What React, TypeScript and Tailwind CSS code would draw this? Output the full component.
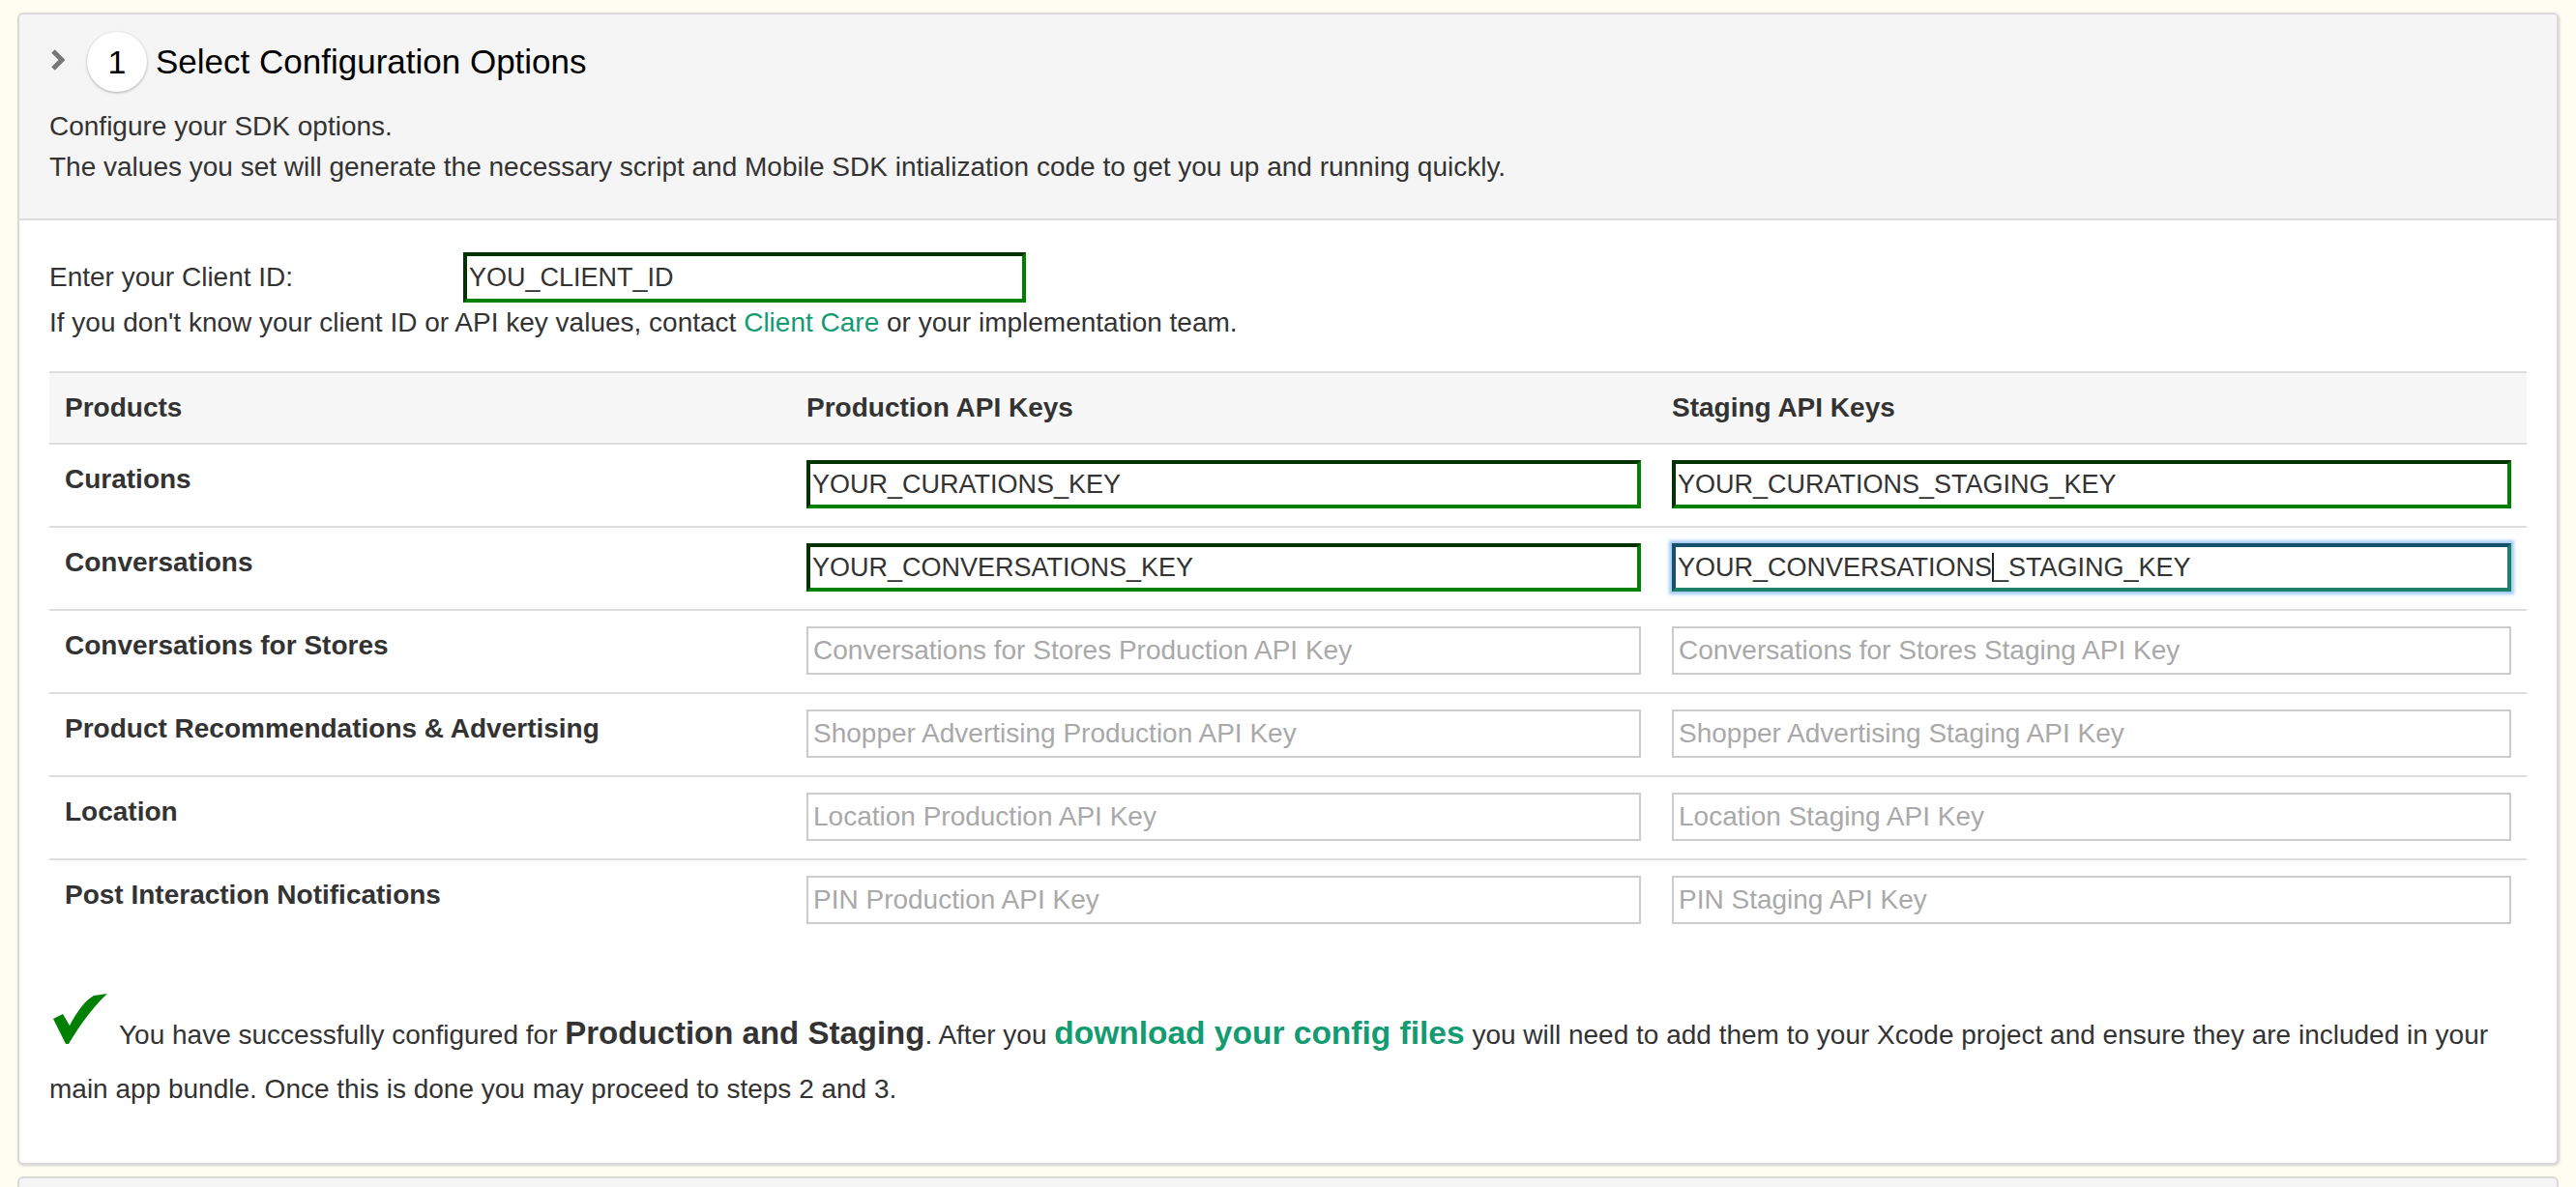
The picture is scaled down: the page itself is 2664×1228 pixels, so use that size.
import React from "react";

const filled =
  "block w-full h-[50px] border-[4px] border-t-[#003300] border-l-[#003300] border-b-[#008000] border-r-[#008000] bg-white px-[2px] text-[27px] text-[#333] outline-none font-['Liberation_Sans',Arial,sans-serif]";
const empty =
  "block w-full h-[50px] border-2 border-[#cccccc] bg-white px-[5px] text-[28px] text-[#333] outline-none placeholder:text-[#a9a9a9] font-['Liberation_Sans',Arial,sans-serif]";

type Row = {
  label: string;
  prod: { value?: string; placeholder?: string };
  stag: { value?: string; placeholder?: string; focused?: boolean };
};

const rows: Row[] = [
  { label: "Curations", prod: { value: "YOUR_CURATIONS_KEY" }, stag: { value: "YOUR_CURATIONS_STAGING_KEY" } },
  {
    label: "Conversations",
    prod: { value: "YOUR_CONVERSATIONS_KEY" },
    stag: { value: "YOUR_CONVERSATIONS_STAGING_KEY", focused: true },
  },
  {
    label: "Conversations for Stores",
    prod: { placeholder: "Conversations for Stores Production API Key" },
    stag: { placeholder: "Conversations for Stores Staging API Key" },
  },
  {
    label: "Product Recommendations & Advertising",
    prod: { placeholder: "Shopper Advertising Production API Key" },
    stag: { placeholder: "Shopper Advertising Staging API Key" },
  },
  {
    label: "Location",
    prod: { placeholder: "Location Production API Key" },
    stag: { placeholder: "Location Staging API Key" },
  },
  {
    label: "Post Interaction Notifications",
    prod: { placeholder: "PIN Production API Key" },
    stag: { placeholder: "PIN Staging API Key" },
  },
];

function Field({ value, placeholder, focused }: { value?: string; placeholder?: string; focused?: boolean }) {
  if (focused && value) {
    return (
      <div className="flex h-[50px] w-full items-center border-[4px] border-t-[#17506a] border-l-[#17506a] border-b-[#1d8068] border-r-[#1d8068] bg-white px-[2px] text-[27px] text-[#333] shadow-[0_0_3px_3px_rgba(110,175,240,0.65)]">
        <span>YOUR_CONVERSATIONS</span>
        <span className="inline-block h-[30px] w-[2px] bg-[#222]" />
        <span>_STAGING_KEY</span>
      </div>
    );
  }
  if (value) return <input readOnly value={value} className={filled} />;
  return <input readOnly placeholder={placeholder} className={empty} />;
}

export default function App() {
  return (
    <div className="min-h-screen bg-[#fdfdf2] px-[18px] pt-[13px] font-['Liberation_Sans',Arial,sans-serif] text-[#333]">
      <div className="overflow-hidden rounded-[6px] border-2 border-[#d9d9d9] bg-white shadow-[1px_1px_3px_rgba(0,0,0,0.18)]">
        {/* Header */}
        <div className="border-b-2 border-[#dcdcdc] bg-[#f5f5f5] px-[31px] pt-[19px] pb-[32px]">
          <div className="flex h-[60px] items-center">
            <svg width="15" height="24" viewBox="0 0 15 24" className="ml-[1px] -mt-[4px]">
              <polyline points="3,3 12,12 3,21" fill="none" stroke="#777" strokeWidth="5" />
            </svg>
            <div className="ml-[23px] flex h-[62px] w-[62px] items-center justify-center rounded-full bg-white text-[34px] text-black shadow-[0_1px_3px_rgba(0,0,0,0.3)]">
              1
            </div>
            <div className="ml-[9px] text-[35px] text-black">Select Configuration Options</div>
          </div>
          <div className="mt-[16px] text-[28px] leading-[42px]">
            <p>Configure your SDK options.</p>
            <p>
              The values you set will generate the necessary script and Mobile SDK intialization code to get you up
              and running quickly.
            </p>
          </div>
        </div>

        {/* Body */}
        <div className="px-[31px] pt-[33px] pb-[48px]">
          <div className="flex items-center text-[28px]">
            <div className="w-[428px]">Enter your Client ID:</div>
            <input
              readOnly
              value="YOU_CLIENT_ID"
              className="block h-[52px] w-[582px] border-[4px] border-t-[#003300] border-l-[#003300] border-b-[#008000] border-r-[#008000] bg-white px-[2px] text-[27px] text-[#333] outline-none font-['Liberation_Sans',Arial,sans-serif]"
            />
          </div>
          <p className="text-[28px] leading-[42px]">
            If you don't know your client ID or API key values, contact{" "}
            <a className="text-[#149b72]">Client Care</a> or your implementation team.
          </p>

          {/* Table */}
          <div className="mt-[29px]">
            <div className="grid h-[74px] grid-cols-[767px_895px_1fr] items-center border-t-2 border-[#dddddd] bg-[#f7f7f7] text-[28px] font-bold text-[#333]">
              <div className="px-[16px]">Products</div>
              <div className="px-[16px]">Production API Keys</div>
              <div className="px-[16px]">Staging API Keys</div>
            </div>
            {rows.map((r) => (
              <div key={r.label} className="grid grid-cols-[767px_895px_1fr] border-t-2 border-[#dddddd]">
                <div className="px-[16px] pt-[16px] pb-[18px] text-[28px] font-bold leading-[40px] text-[#333]">
                  {r.label}
                </div>
                <div className="px-[16px] pt-[16px] pb-[18px]">
                  <Field {...r.prod} />
                </div>
                <div className="px-[16px] pt-[16px] pb-[18px]">
                  <Field {...r.stag} />
                </div>
              </div>
            ))}
          </div>

          {/* Success message */}
          <p className="mt-[69px] text-[28px] leading-[56px]">
            <svg
              width="56"
              height="52"
              viewBox="0 0 56 52"
              className="ml-[4px] mr-[12px] -mt-[16px] inline-block align-baseline"
            >
              <path d="M0,26 L10,21 L17,33 C25,18 33,7 42,2 L56,0 C43,12 29,30 16,52 L13,52 Z" fill="#008000" />
            </svg>
            <span>You have successfully configured for </span>
            <span className="text-[33px] font-bold leading-none text-[#333]">Production and Staging</span>
            <span>. After you </span>
            <a className="text-[33.5px] font-bold leading-none text-[#149b72]">download your config files</a>
            <span> you will need to add them to your Xcode project and ensure they are included in your</span>
            <br />
            <span>main app bundle. Once this is done you may proceed to steps 2 and 3.</span>
          </p>
        </div>
      </div>
      <div className="mt-[12px] h-[60px] rounded-t-[6px] border-2 border-[#d9d9d9] bg-[#f5f5f5]" />
    </div>
  );
}
